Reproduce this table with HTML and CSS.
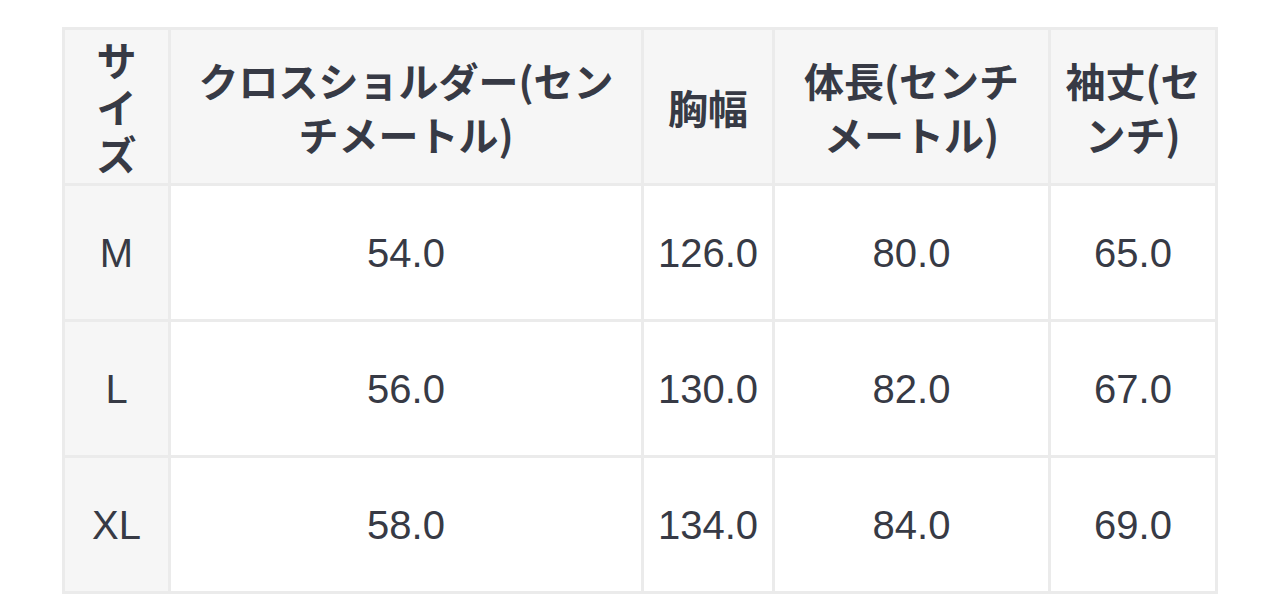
FILE: index.html
```html
<!DOCTYPE html>
<html lang="ja">
<head>
<meta charset="utf-8">
<title>サイズ表</title>
<link rel="stylesheet" href="styles.css">
</head>
<body>
<table class="size-table">
  <thead>
    <tr class="head-row">
      <th class="c-size size-head">サイズ</th>
      <th class="c-cross">クロスショルダー(センチメートル)</th>
      <th class="c-chest">胸幅</th>
      <th class="c-length">体長(センチメートル)</th>
      <th class="c-sleeve">袖丈(センチ)</th>
    </tr>
  </thead>
  <tbody>
    <tr class="data-row">
      <th class="c-size row-label">M</th>
      <td>54.0</td>
      <td>126.0</td>
      <td>80.0</td>
      <td>65.0</td>
    </tr>
    <tr class="data-row">
      <th class="c-size row-label">L</th>
      <td>56.0</td>
      <td>130.0</td>
      <td>82.0</td>
      <td>67.0</td>
    </tr>
    <tr class="data-row">
      <th class="c-size row-label">XL</th>
      <td>58.0</td>
      <td>134.0</td>
      <td>84.0</td>
      <td>69.0</td>
    </tr>
  </tbody>
</table>
</body>
</html>
```

FILE: styles.css
```css
html, body {
  margin: 0;
  padding: 0;
  background: #ffffff;
}

body {
  padding: 27px 0 0 62px;
}

.size-table {
  border-collapse: separate;
  border-spacing: 0;
  table-layout: fixed;
  width: 1156px;
  border-top: 3px solid #ebebeb;
  border-left: 3px solid #ebebeb;
  color: #373a45;
}

.size-table th,
.size-table td {
  box-sizing: border-box;
  border-right: 3px solid #ebebeb;
  border-bottom: 3px solid #ebebeb;
  padding: 0 12px;
  text-align: center;
  vertical-align: middle;
}

.head-row th {
  height: 156px;
  background: #f6f6f6;
  font-family: "Noto Sans CJK JP", "Noto Sans", sans-serif;
  font-weight: 700;
  font-size: 40px;
  line-height: 54px;
}

.head-row .size-head {
  line-height: 47px;
  padding: 0 16px;
}

.c-size { width: 106px; }
.c-cross { width: 473px; }
.c-chest { width: 131px; }
.c-length { width: 276px; }
.c-sleeve { width: 167px; }

.data-row th,
.data-row td {
  height: 136px;
  font-family: "Liberation Sans", Arial, sans-serif;
  font-weight: 400;
  font-size: 40px;
  line-height: 46px;
}

.data-row td {
  background: #ffffff;
}

.row-label {
  background: #f6f6f6;
}
```
